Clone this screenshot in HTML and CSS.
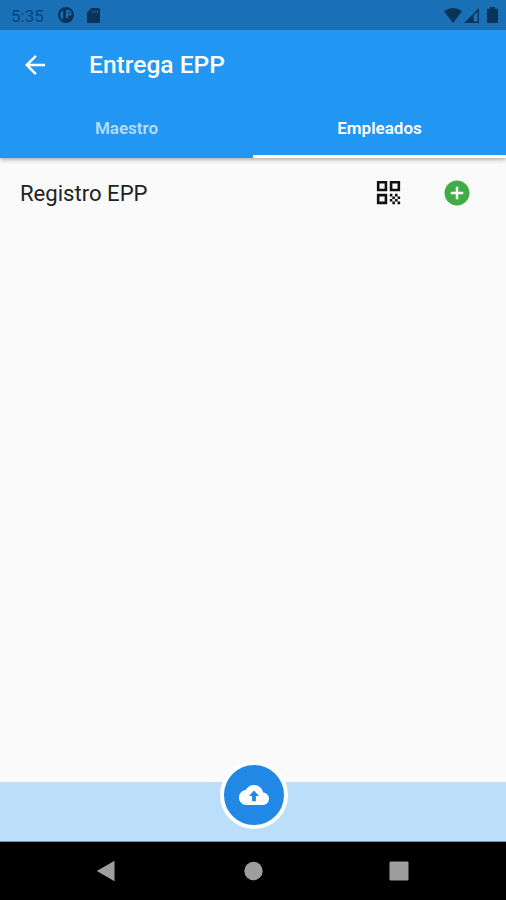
FILE: index.html
```
<!DOCTYPE html>
<html lang="es">
<head>
    <meta charset="UTF-8">
    <title>Entrega EPP</title>
    <link rel="stylesheet" href="styles.css">
</head>
<body>
    <header>
        <div class="status-bar">
            <span class="time">5:35</span>
            <svg class="app-icon" width="16" height="16" viewBox="0 0 16 16">
                <path fill-rule="evenodd" d="M8 0a8 8 0 1 0 0 16A8 8 0 0 0 8 0zM5 3.2V12.800A5.600 5.600 0 0 1 5 3.200zM8 3h3.500a4 4 0 0 1 2 3v2.500H10V11H8zM10 4.800v2h1.500v-2z"/>
            </svg>
            <svg class="sd-icon" width="13" height="15" viewBox="0 0 13 15">
                <path fill-rule="evenodd" d="M4.5 0h7A1.5 1.5 0 0 1 13 1.5v12a1.5 1.5 0 0 1-1.5 1.5h-10A1.5 1.5 0 0 1 0 13.5v-9zM4.6 2.8v2h1.2v-2zM7.2 2.8v2h1.2v-2zM9.8 2.8v2h1.2v-2z"/>
            </svg>
            <div class="system-icons">
                <svg width="18" height="15" viewBox="0 0 18 15">
                    <path d="M0 3.2Q9-3 18 3.2L9 15z"/>
                </svg>
                <svg width="15" height="15" viewBox="0 0 15 15">
                    <path fill-rule="evenodd" d="M15 0v15H0zM13.6 3.4L9.6 7.4v6.2h4z"/>
                </svg>
                <svg class="battery" width="11" height="16" viewBox="0 0 11 16">
                    <path d="M3 0h5v1.8h2a1 1 0 0 1 1 1V15a1 1 0 0 1-1 1H1a1 1 0 0 1-1-1V2.8a1 1 0 0 1 1-1h2z"/>
                </svg>
            </div>
        </div>
        <div class="app-bar">
            <svg width="30" height="30" viewBox="0 0 24 24">
                <path d="M20 11H7.83l5.59-5.59L12 4l-8 8 8 8 1.41-1.41L7.83 13H20v-2z"/>
            </svg>
            <h1>Entrega EPP</h1>
        </div>
        <nav class="tabs">
            <a class="tab">Maestro</a>
            <a class="tab active">Empleados</a>
        </nav>
    </header>

    <main>
        <div class="list-row">
            <h2>Registro EPP</h2>
            <svg class="qr" width="31" height="31" viewBox="0 0 24 24">
                <path fill-rule="evenodd" d="M3 11h8V3H3v8zm2-6h4v4H5V5zM3 21h8v-8H3v8zm2-6h4v4H5v-4zM13 3v8h8V3h-8zm6 6h-4V5h4v4z"/>
                <path d="M19 19h2v2h-2zM13 13h2v2h-2zM15 15h2v2h-2zM13 17h2v2h-2zM15 19h2v2h-2zM17 17h2v2h-2zM17 13h2v2h-2zM19 15h2v2h-2z"/>
            </svg>
            <svg class="add" width="30" height="30" viewBox="0 0 24 24">
                <path d="M12 2C6.48 2 2 6.48 2 12s4.48 10 10 10 10-4.48 10-10S17.52 2 12 2zm5 11h-4v4h-2v-4H7v-2h4V7h2v4h4v2z"/>
            </svg>
        </div>
    </main>

    <footer>
        <div class="bottom-bar">
            <div class="upload-btn">
                <svg width="30" height="30" viewBox="0 0 24 24">
                    <path d="M19.35 10.04C18.67 6.59 15.64 4 12 4 9.11 4 6.6 5.64 5.35 8.04 2.34 8.36 0 10.91 0 14c0 3.31 2.69 6 6 6h13c2.76 0 5-2.24 5-5 0-2.64-2.05-4.78-4.65-4.96zM13.5 12.7V17h-3v-4.3H8l4-4.4 4 4.4z"/>
                </svg>
            </div>
        </div>
        <div class="nav-bar">
            <svg width="20" height="22" viewBox="0 0 20 22">
                <path d="M18.5 .8v20.4L.8 11z"/>
            </svg>
            <svg width="20" height="20" viewBox="0 0 20 20">
                <circle cx="10.5" cy="10" r="9.2"/>
            </svg>
            <svg width="20" height="20" viewBox="0 0 20 20">
                <rect x=".5" y=".5" width="19" height="19" rx="1.2"/>
            </svg>
        </div>
    </footer>
</body>
</html>
```
FILE: styles.css
```
* {
    margin: 0;
    padding: 0;
    box-sizing: border-box;
}

body {
    font-family: Roboto, sans-serif;
    background-color: #fafafa;
    display: flex;
    flex-direction: column;
    height: 100vh;
    overflow: hidden;
}

svg {
    display: block;
    flex-shrink: 0;
}

header {
    background-color: #2196f3;
    color: white;
    height: 158px;
    box-shadow: 0 1px 5px rgba(0, 0, 0, 0.4);
}

.status-bar {
    display: flex;
    align-items: center;
    height: 30px;
    padding: 0 8px 0 11px;
    background-color: #1a70b7;
    color: #0d4373;
    fill: #0b3357;
}

.time {
    width: 47px;
    font-size: 17px;
    line-height: 30px;
    padding-top: 2px;
}

.sd-icon {
    margin-left: 13px;
}

.system-icons {
    display: flex;
    align-items: center;
    margin-left: auto;
}

.system-icons svg + svg {
    margin-left: 2px;
}

.system-icons .battery {
    margin-left: 8px;
}

.app-bar {
    display: flex;
    align-items: center;
    height: 69px;
    padding-left: 20px;
    fill: white;
}

h1 {
    margin-left: 39px;
    font-size: 24.6px;
    font-weight: 500;
}

.tabs {
    display: flex;
    height: 59px;
}

.tab {
    flex: 1;
    text-align: center;
    font-size: 17px;
    font-weight: 600;
    line-height: 58px;
    color: #b5dcfb;
}

.tab.active {
    color: white;
    border-bottom: 3px solid white;
}

main {
    flex: 1;
}

.list-row {
    display: flex;
    align-items: center;
    height: 69px;
    padding: 0 34px 0 20px;
}

h2 {
    flex: 1;
    font-size: 22.1px;
    font-weight: 400;
    color: #222;
}

.qr {
    margin-right: 38px;
    fill: #111;
}

.add {
    fill: #3fac46;
}

.bottom-bar {
    position: relative;
    height: 60px;
    background-color: #bbdefb;
    border-bottom: 1px solid #7593ad;
}

/* button sits over the top edge of the bar */
.upload-btn {
    position: absolute;
    top: -21px;
    left: 50%;
    margin-left: -33.5px;
    display: flex;
    align-items: center;
    justify-content: center;
    width: 68px;
    height: 68px;
    border: 4.5px solid white;
    border-radius: 50%;
    background-color: #2189e5;
    fill: white;
}

.nav-bar {
    display: flex;
    align-items: center;
    justify-content: space-between;
    height: 58px;
    padding: 0 97px 0 96px;
    background-color: black;
    fill: #9e9e9e;
}
```
